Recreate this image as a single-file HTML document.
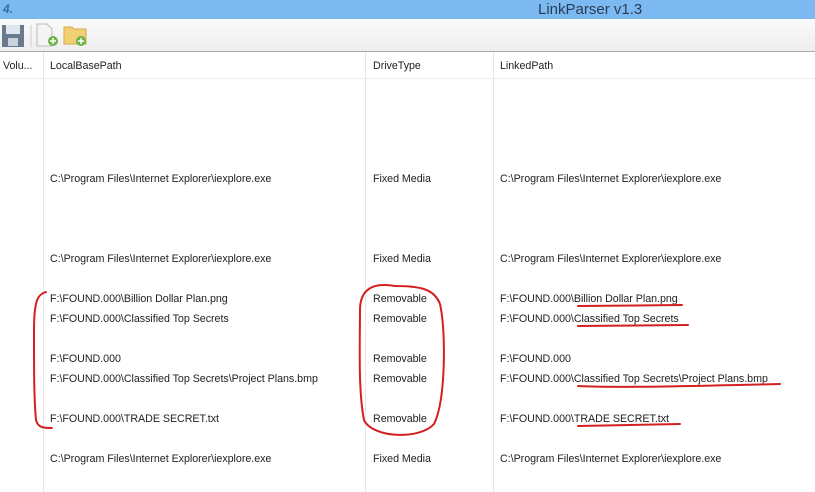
<!DOCTYPE html>
<html><head><style>
body{margin:0;width:815px;height:492px;overflow:hidden;background:#fff;font-family:"Liberation Sans",sans-serif;font-size:10.7px;color:#222;position:relative}
.t{position:absolute;white-space:nowrap;letter-spacing:-0.03px}
</style></head><body>
<div style="position:absolute;left:0;top:0;width:815px;height:19px;background:#7bb9f0"></div>
<div class="t" style="left:538px;top:1px;font-size:15px;color:#2a3d55;letter-spacing:0">LinkParser v1.3</div>
<div class="t" style="left:3px;top:2px;font-size:12px;font-weight:bold;font-style:italic;color:#2d6fb0">4.</div>
<div style="position:absolute;left:0;top:19px;width:815px;height:32px;background:linear-gradient(#fafafa,#eeeeee)"></div>
<div style="position:absolute;left:0;top:51px;width:815px;height:1px;background:#aaa"></div>
<svg style="position:absolute;left:0;top:20px" width="100" height="30">
<rect x="2" y="5" width="22" height="22" fill="#6a7a8e"/><rect x="6" y="5" width="14" height="9" fill="#dfe6ee"/><rect x="8" y="18" width="10" height="8" fill="#c9d2dc"/>
<line x1="31" y1="5" x2="31" y2="27" stroke="#ccc"/>
<path d="M37 4h10l5 5v17h-15z" fill="#f4f4f4" stroke="#bbb"/><circle cx="53" cy="21" r="5" fill="#6bb34a"/><path d="M50 21h6M53 18v6" stroke="#fff" stroke-width="1.5"/>
<path d="M64 7h8l2 2h12v15h-22z" fill="#f2cf73" stroke="#d7ab4a"/><circle cx="81" cy="21" r="5" fill="#6bb34a"/><path d="M78 21h6M81 18v6" stroke="#fff" stroke-width="1.5"/>
</svg>
<div style="position:absolute;left:0;top:78px;width:815px;height:1px;background:#eee"></div>
<div style="position:absolute;left:43px;top:52px;width:1px;height:440px;background:#e6e6e6"></div>
<div style="position:absolute;left:365px;top:52px;width:1px;height:440px;background:#e6e6e6"></div>
<div style="position:absolute;left:493px;top:52px;width:1px;height:440px;background:#e6e6e6"></div>
<div class="t" style="left:3px;top:60px">Volu...</div>
<div class="t" style="left:50px;top:60px">LocalBasePath</div>
<div class="t" style="left:373px;top:60px">DriveType</div>
<div class="t" style="left:500px;top:60px">LinkedPath</div>
<div class="t" style="left:50px;top:173px">C:\Program Files\Internet Explorer\iexplore.exe</div><div class="t" style="left:373px;top:173px">Fixed Media</div><div class="t" style="left:500px;top:173px">C:\Program Files\Internet Explorer\iexplore.exe</div>
<div class="t" style="left:50px;top:253px">C:\Program Files\Internet Explorer\iexplore.exe</div><div class="t" style="left:373px;top:253px">Fixed Media</div><div class="t" style="left:500px;top:253px">C:\Program Files\Internet Explorer\iexplore.exe</div>
<div class="t" style="left:50px;top:293px">F:\FOUND.000\Billion Dollar Plan.png</div><div class="t" style="left:373px;top:293px">Removable</div><div class="t" style="left:500px;top:293px">F:\FOUND.000\Billion Dollar Plan.png</div>
<div class="t" style="left:50px;top:313px">F:\FOUND.000\Classified Top Secrets</div><div class="t" style="left:373px;top:313px">Removable</div><div class="t" style="left:500px;top:313px">F:\FOUND.000\Classified Top Secrets</div>
<div class="t" style="left:50px;top:353px">F:\FOUND.000</div><div class="t" style="left:373px;top:353px">Removable</div><div class="t" style="left:500px;top:353px">F:\FOUND.000</div>
<div class="t" style="left:50px;top:373px">F:\FOUND.000\Classified Top Secrets\Project Plans.bmp</div><div class="t" style="left:373px;top:373px">Removable</div><div class="t" style="left:500px;top:373px">F:\FOUND.000\Classified Top Secrets\Project Plans.bmp</div>
<div class="t" style="left:50px;top:413px">F:\FOUND.000\TRADE SECRET.txt</div><div class="t" style="left:373px;top:413px">Removable</div><div class="t" style="left:500px;top:413px">F:\FOUND.000\TRADE SECRET.txt</div>
<div class="t" style="left:50px;top:453px">C:\Program Files\Internet Explorer\iexplore.exe</div><div class="t" style="left:373px;top:453px">Fixed Media</div><div class="t" style="left:500px;top:453px">C:\Program Files\Internet Explorer\iexplore.exe</div>
<svg style="position:absolute;left:0;top:0" width="815" height="492" fill="none" stroke="#d42020" stroke-width="2" stroke-linecap="round">
<path d="M46 292 C38 294 34 300 34 330 C34 370 34 400 36 420 C38 428 44 428 52 428"/>
<path d="M395 286 C372 282 360 290 360 310 C360 340 358 390 364 420 C372 438 420 440 434 424 C446 400 446 330 440 304 C434 288 418 286 395 286"/>
<path d="M578 306 L682 305"/>
<path d="M578 326 L688 325"/>
<path d="M578 386 C620 388 700 386 780 384"/>
<path d="M578 426 L680 424"/>
</svg>
</body></html>
